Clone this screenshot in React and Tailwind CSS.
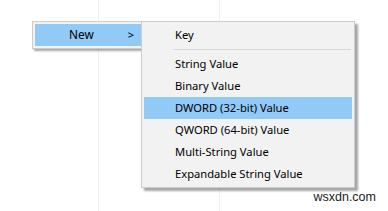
import React from "react";

const items = [
  "String Value",
  "Binary Value",
  "DWORD (32-bit) Value",
  "QWORD (64-bit) Value",
  "Multi-String Value",
  "Expandable String Value",
];

export default function App() {
  return (
    <div
      className="relative h-[211px] w-[388px] overflow-hidden bg-white text-[11.2px] text-black"
      style={{ fontFamily: '"Segoe UI", "Noto Sans", "Open Sans", sans-serif' }}
    >
      {/* faint column dividers in the background */}
      <div className="flex h-full">
        <div className="w-[99px] shrink-0 border-r border-[#f0f0f0]" />
        <div className="w-[121px] shrink-0 border-r border-[#eef0f2]" />
      </div>

      {/* parent menu */}
      <div className="absolute left-[32px] top-[21px] w-[110px] border border-[#cccccc] bg-[#f2f2f2] py-[2px] pl-[2px] shadow-[2px_2px_2px_rgba(0,0,0,0.35)]">
        <div className="flex h-[22px] items-center bg-[#91c9f7]">
          <span className="ml-[34px] text-[11.8px]">New</span>
          <span className="ml-auto mr-[7px] text-[11px]">&gt;</span>
        </div>
      </div>

      {/* submenu */}
      <div className="absolute left-[141px] top-[21px] w-[214px] border border-[#cccccc] bg-[#f2f2f2] p-[2px] shadow-[3px_3px_2px_rgba(0,0,0,0.35)]">
        <div className="flex h-[22px] items-center pl-[31px]">Key</div>
        <div className="my-[3px] ml-[29px] mr-[1px] h-px bg-[#d7d7d7]" />
        {items.map((t, i) => (
          <div
            key={t}
            className={
              i === 2
                ? "flex h-[22px] items-center bg-[#91c9f7] pl-[31px]"
                : "flex h-[22px] items-center pl-[31px]"
            }
          >
            {t}
          </div>
        ))}
      </div>

      <div
        className="absolute right-[12px] bottom-[4px] text-[12.5px] text-[#222]"
        style={{ fontFamily: '"Liberation Sans", Arial, sans-serif' }}
      >
        wsxdn.com
      </div>
    </div>
  );
}
